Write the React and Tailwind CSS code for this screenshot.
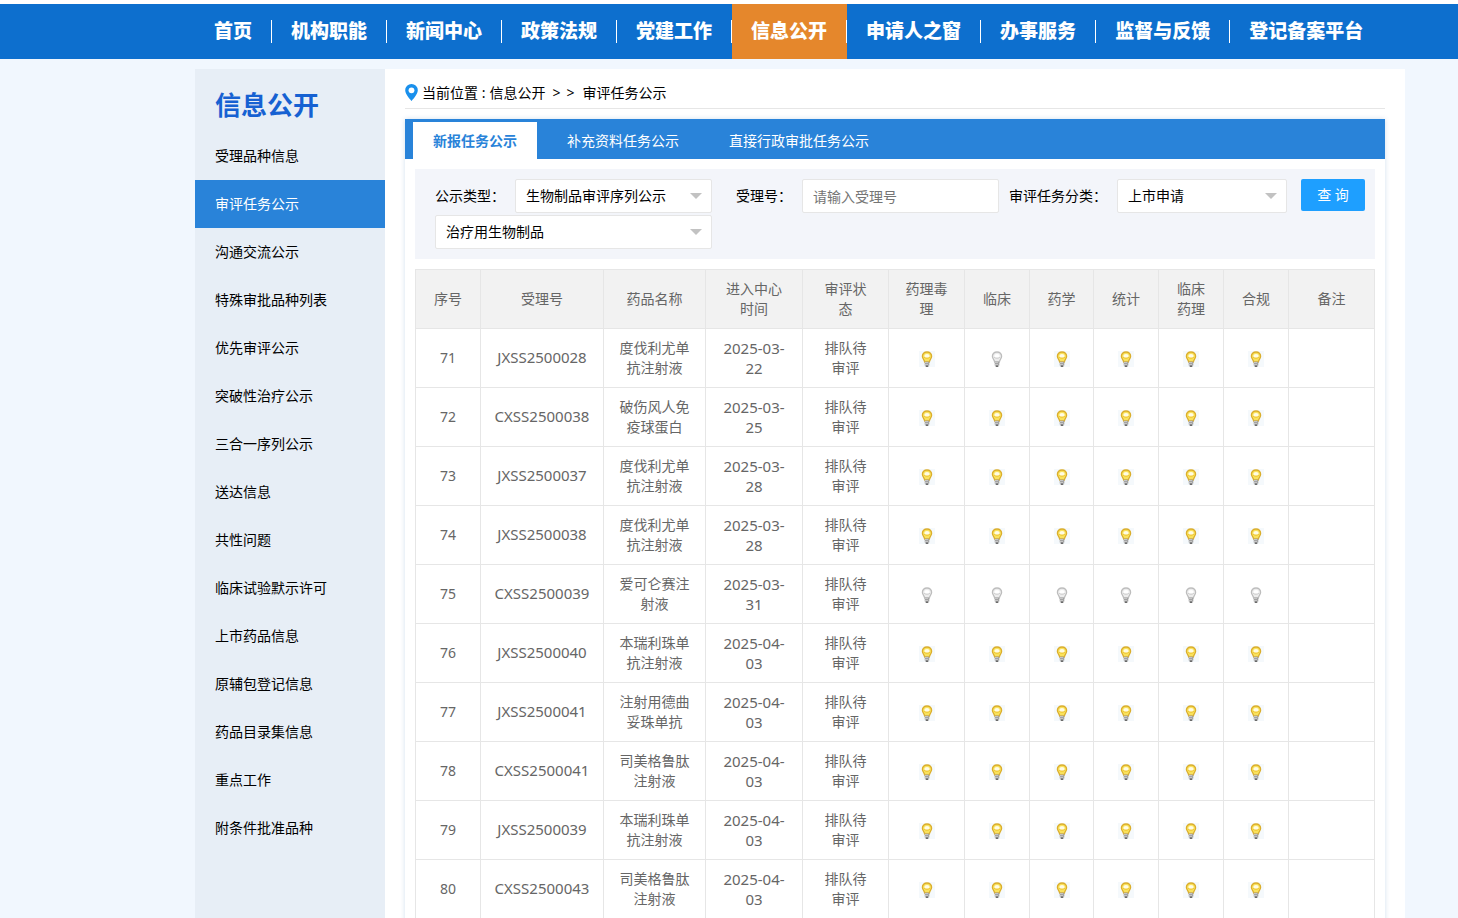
import React, { useState } from 'react';

const navItems = [
  '首页', '机构职能', '新闻中心', '政策法规', '党建工作',
  '信息公开', '申请人之窗', '办事服务', '监督与反馈', '登记备案平台',
];

const sideItems = [
  '受理品种信息', '审评任务公示', '沟通交流公示', '特殊审批品种列表', '优先审评公示',
  '突破性治疗公示', '三合一序列公示', '送达信息', '共性问题', '临床试验默示许可',
  '上市药品信息', '原辅包登记信息', '药品目录集信息', '重点工作', '附条件批准品种',
];

const tabs = ['新报任务公示', '补充资料任务公示', '直接行政审批任务公示'];

const columns = [
  { title: '序号', width: 'w-[65px]' },
  { title: '受理号', width: 'w-[123px]' },
  { title: '药品名称', width: 'w-[102px]' },
  { title: '进入中心时间', width: 'w-[97px]' },
  { title: '审评状态', width: 'w-[86px]' },
  { title: '药理毒理', width: 'w-[76px]' },
  { title: '临床', width: 'w-[65px]' },
  { title: '药学', width: 'w-[64px]' },
  { title: '统计', width: 'w-[65px]' },
  { title: '临床药理', width: 'w-[65px]' },
  { title: '合规', width: 'w-[65px]' },
  { title: '备注', width: 'w-[86px]' },
];

// lights: 1 = waiting, 0 = not needed
const rows = [
  { id: 71, no: 'JXSS2500028', name: '度伐利尤单抗注射液', date: '2025-03-22', lights: [1, 0, 1, 1, 1, 1] },
  { id: 72, no: 'CXSS2500038', name: '破伤风人免疫球蛋白', date: '2025-03-25', lights: [1, 1, 1, 1, 1, 1] },
  { id: 73, no: 'JXSS2500037', name: '度伐利尤单抗注射液', date: '2025-03-28', lights: [1, 1, 1, 1, 1, 1] },
  { id: 74, no: 'JXSS2500038', name: '度伐利尤单抗注射液', date: '2025-03-28', lights: [1, 1, 1, 1, 1, 1] },
  { id: 75, no: 'CXSS2500039', name: '爱可仑赛注射液', date: '2025-03-31', lights: [0, 0, 0, 0, 0, 0] },
  { id: 76, no: 'JXSS2500040', name: '本瑞利珠单抗注射液', date: '2025-04-03', lights: [1, 1, 1, 1, 1, 1] },
  { id: 77, no: 'JXSS2500041', name: '注射用德曲妥珠单抗', date: '2025-04-03', lights: [1, 1, 1, 1, 1, 1] },
  { id: 78, no: 'CXSS2500041', name: '司美格鲁肽注射液', date: '2025-04-03', lights: [1, 1, 1, 1, 1, 1] },
  { id: 79, no: 'JXSS2500039', name: '本瑞利珠单抗注射液', date: '2025-04-03', lights: [1, 1, 1, 1, 1, 1] },
  { id: 80, no: 'CXSS2500043', name: '司美格鲁肽注射液', date: '2025-04-03', lights: [1, 1, 1, 1, 1, 1] },
];

const Bulb = ({ on }) => (
  <svg width="16" height="16" viewBox="0 0 16 16" className="mx-auto block" aria-hidden="true">
    {on ? <rect width="16" height="16" fill="#f5f9fc" /> : null}
    <path
      d="M8 1C5.100 1 3.400 3 3.400 5.300c0 2.200 1.700 3.200 2.300 5.700h4.600c.6-2.500 2.300-3.500 2.300-5.700C12.600 3 10.900 1 8 1z"
      fill={on ? '#f9e25c' : '#ececec'}
      stroke={on ? '#dbae2c' : '#bdbdbd'}
      strokeWidth="1.300"
    />
    <ellipse cx="8" cy="5" rx="2.700" ry="2" fill={on ? '#fffce4' : '#ffffff'} />
    <path d="M5.200 6.300c1.500 1.200 4.100 1.200 5.600 0" fill="none" stroke={on ? '#eec22a' : '#c9c9c9'} />
    <rect x="5.700" y="10.700" width="4.600" height="3.800" fill="#a3a3a3" />
    <path d="M6 11.500h3M6 13.500h3" stroke="#d6d6d6" strokeWidth=".7" />
    <rect x="6.700" y="14.300" width="2.600" height="1.700" fill="#6a6a6a" />
  </svg>
);

const Select = ({ id, label, options, className }) => (
  <div className={`relative ${className}`}>
    <select
      id={id}
      aria-label={label}
      className="block h-[34px] w-full appearance-none rounded-xs border border-[#e6e6e6] bg-white pl-[10px] pr-6 text-sm text-black"
    >
      {options.map((o) => (
        <option key={o}>{o}</option>
      ))}
    </select>
    <svg width="12" height="6" viewBox="0 0 12 6" className="pointer-events-none absolute right-[10px] top-[14px]" aria-hidden="true">
      <path d="M0 0h12L6 6z" fill="#c2c2c2" />
    </svg>
  </div>
);

const App = () => {
  const [tab, setTab] = useState(0);
  const [keyword, setKeyword] = useState('');

  return (
    <div className="min-h-screen bg-white pt-1 font-['Noto_Sans','Noto_Sans_CJK_SC',sans-serif] text-sm text-black">
      <nav className="flex h-[55px] items-stretch bg-[#0d6fce] pl-[195px]">
        {navItems.map((item, i) => (
          <a
            key={item}
            href="#"
            className={`flex items-center whitespace-nowrap text-[19px] font-black text-white ${item === '信息公开' ? 'bg-[#e5872c]' : ''}`}
          >
            <span className="px-[19px]">{item}</span>
            <span className={`h-[23px] w-px ${i < navItems.length - 1 ? 'bg-white' : ''}`} />
          </a>
        ))}
      </nav>

      <div className="bg-[#f1f7fe] pl-[195px] pr-[53px] pt-[10px]">
        <div className="flex bg-white">
          <aside className="w-[190px] shrink-0 bg-[#e7eef6]">
            <h2 className="flex h-[63px] items-center px-5 pt-[10px] text-[26px] font-bold text-[#1661d2]">信息公开</h2>
            <ul>
              {sideItems.map((item) => (
                <li key={item}>
                  <a
                    href="#"
                    className={`flex h-12 items-center px-5 ${item === '审评任务公示' ? 'bg-[#2983d9] text-white' : ''}`}
                  >
                    {item}
                  </a>
                </li>
              ))}
            </ul>
          </aside>

          <main className="min-w-0 flex-1 px-5">
            <div className="flex h-10 items-center border-b border-[#e6e6e6] pt-2">
              <svg width="13" height="17" viewBox="0 0 13 17" className="mr-1" aria-hidden="true">
                <path d="M6.500 0A6.300 6.300 0 0 0 .2 6.300C.2 10.500 6.500 17 6.500 17s6.300-6.500 6.300-10.700A6.300 6.300 0 0 0 6.500 0z" fill="#1a90ec" />
                <circle cx="6.500" cy="6.300" r="2.900" fill="#fff" />
              </svg>
              <span>当前位置 :</span>
              <a href="#" className="ml-1">信息公开</a>
              <span className="ml-[7px]">&gt;</span>
              <span className="ml-[6px]">&gt;</span>
              <a href="#" className="ml-2">审评任务公示</a>
            </div>

            <section className="mt-[10px] shadow-[0_0_5px_rgba(0,80,160,0.18)]">
              <div className="flex h-10 items-end gap-[10px] bg-[#2983d9] px-2">
                {tabs.map((t, i) => (
                  <button
                    key={t}
                    type="button"
                    onClick={() => setTab(i)}
                    className={`h-[37px] px-5 ${tab === i ? 'bg-white font-bold text-[#2983d9]' : 'text-white'}`}
                  >
                    {t}
                  </button>
                ))}
              </div>

              <div className="p-[10px]">
                <form className="h-[90px] bg-[#f3f5fa] pl-5 pr-[10px] pt-[10px]" onSubmit={(e) => e.preventDefault()}>
                  <div className="flex items-center">
                    <label htmlFor="type" className="w-20 shrink-0">公示类型：</label>
                    <Select id="type" options={['生物制品审评序列公示', '化药审评序列公示']} className="w-[197px]" />
                    <label htmlFor="acceptNo" className="ml-6 w-[66px] shrink-0">受理号：</label>
                    <input
                      id="acceptNo"
                      type="text"
                      value={keyword}
                      onChange={(e) => setKeyword(e.target.value)}
                      placeholder="请输入受理号"
                      className="h-[34px] w-[197px] rounded-xs border border-[#e6e6e6] bg-white px-[10px] placeholder:text-[#757575]"
                    />
                    <label htmlFor="category" className="ml-[10px] w-[108px] shrink-0">审评任务分类：</label>
                    <Select id="category" options={['上市申请', '临床试验申请']} className="w-[170px]" />
                    <button type="submit" className="mb-[2px] ml-auto h-8 w-16 rounded-xs bg-[#1e9fff] text-white">
                      查 询
                    </button>
                  </div>
                  <Select label="药品分类" options={['治疗用生物制品', '预防用生物制品']} className="mt-[2px] w-[277px]" />
                </form>

                <table className="mt-[10px] w-full table-fixed border-collapse text-center text-[#666]">
                  <thead>
                    <tr className="h-[59px] bg-[#f2f2f2]">
                      {columns.map((c) => (
                        <th key={c.title} className={`${c.width} border border-[#e6e6e6] px-[15px] font-normal`}>
                          {c.title}
                        </th>
                      ))}
                    </tr>
                  </thead>
                  <tbody>
                    {rows.map((r) => (
                      <tr key={r.id} className="h-[59px]">
                        <td className="border border-[#e6e6e6]">{r.id}</td>
                        <td className="border border-[#e6e6e6] text-[15px]">{r.no}</td>
                        <td className="border border-[#e6e6e6] px-[15px]">{r.name}</td>
                        <td className="border border-[#e6e6e6] px-[15px] text-[15px] leading-5">{r.date}</td>
                        <td className="border border-[#e6e6e6] px-[15px]">排队待审评</td>
                        {r.lights.map((on, i) => (
                          <td key={i} className="border border-[#e6e6e6] pt-[2px]">
                            <Bulb on={on} />
                          </td>
                        ))}
                        <td className="border border-[#e6e6e6]"></td>
                      </tr>
                    ))}
                  </tbody>
                </table>
              </div>
            </section>
          </main>
        </div>
      </div>
    </div>
  );
};

export default App;
